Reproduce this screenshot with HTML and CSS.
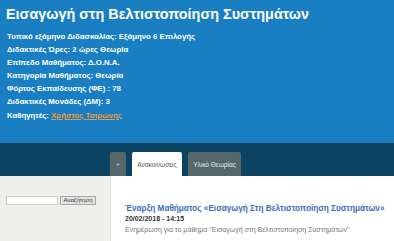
FILE: index.html
```html
<!DOCTYPE html>
<html lang="el">
<head>
  <meta charset="UTF-8" />
  <title>Εισαγωγή στη Βελτιστοποίηση Συστημάτων</title>
  <link rel="stylesheet" href="styles.css">
</head>
<body>
  <div class="header">
    <h1 class="title">Εισαγωγή στη Βελτιστοποίηση Συστημάτων</h1>
    <div class="info">
      <div>Τυπικό εξάμηνο Διδασκαλίας: Εξάμηνο 6 Επιλογής</div>
      <div>Διδακτικές Ώρες: 2 ώρες Θεωρία</div>
      <div>Επίπεδο Μαθήματος: Δ.Ο.Ν.Α.</div>
      <div>Κατηγορία Μαθήματος: Θεωρία</div>
      <div>Φόρτος Εκπαίδευσης (ΦΕ) : 78</div>
      <div>Διδακτικές Μονάδες (ΔΜ): 3</div>
      <div>Καθηγητές: <a href="#" class="prof">Χρήστος Τσιρώνης</a></div>
    </div>
  </div>

  <div class="tabbar">
    <div class="tab tab-plus">+</div>
    <div class="tab tab-active">Ανακοινώσεις</div>
    <div class="tab tab-wide">Υλικό Θεωρίας</div>
  </div>

  <div class="main">
    <div class="sidebar">
      <form class="search">
        <input type="text" class="search-input">
        <button type="button" class="search-btn">Αναζήτηση</button>
      </form>
    </div>
    <div class="content">
      <div class="post">
        <a href="#" class="post-title">Έναρξη Μαθήματος «Εισαγωγή Στη Βελτιστοποίηση Συστημάτων»</a>
        <div class="post-date">20/02/2018 - 14:15</div>
        <div class="post-text">Ενημέρωση για το μάθημα "Εισαγωγή στη Βελτιστοποίηση Συστημάτων"</div>
      </div>
    </div>
  </div>
</body>
</html>
```

FILE: styles.css
```css
* { margin: 0; padding: 0; box-sizing: border-box; }
body {
  font-family: "Liberation Sans", Arial, sans-serif;
  background: #fff;
  width: 394px;
  height: 241px;
  overflow: hidden;
}
.header {
  background: #1a7fc2;
  color: #fff;
  height: 143px;
  padding: 4px 7px 0;
}
.title {
  font-size: 14.4px;
  font-weight: bold;
  line-height: 20px;
  margin-left: -1px;
}
.info {
  margin-top: 6px;
  font-size: 7.8px;
  font-weight: bold;
  line-height: 13.1px;
}
.prof {
  color: #e89a3c;
}
.tabbar {
  background: #0c4262;
  height: 33px;
  display: flex;
  align-items: flex-end;
  gap: 6px;
  padding-left: 110px;
}
.tab {
  background: #56676c;
  color: #e8e8e8;
  font-size: 6.5px;
  height: 24px;
  display: flex;
  align-items: center;
  justify-content: center;
  border-radius: 2px 2px 0 0;
}
.tab-plus {
  width: 16px;
  font-size: 6px;
}
.tab-active {
  background: #fff;
  color: #555;
  width: 50px;
}
.tab-wide {
  width: 53px;
}
.main {
  display: flex;
  height: 65px;
}
.sidebar {
  width: 111px;
  background: #efefeb;
  border-right: 1px solid #e2e2de;
  padding: 20px 0 0 6px;
}
.search {
  display: flex;
  gap: 2px;
  align-items: center;
}
.search-input {
  width: 52px;
  height: 9px;
  border: 1px solid #cfcfcf;
  background: #fff;
}
.search-btn {
  font-family: "Liberation Sans", Arial, sans-serif;
  font-size: 6px;
  color: #333;
  height: 9px;
  width: 36px;
  border: 1px solid #a8a8a8;
  background: #e4e4e4;
  line-height: 7px;
}
.content {
  flex: 1;
  padding: 28px 0 0 14px;
}
.post-title {
  display: block;
  font-size: 8.2px;
  font-weight: bold;
  color: #3a6dbd;
  text-decoration: none;
  line-height: 10px;
  white-space: nowrap;
}
.post-date {
  font-size: 7px;
  font-weight: bold;
  color: #333;
  line-height: 10px;
}
.post-text {
  font-size: 7px;
  color: #777;
  line-height: 11px;
  white-space: nowrap;
}
```
